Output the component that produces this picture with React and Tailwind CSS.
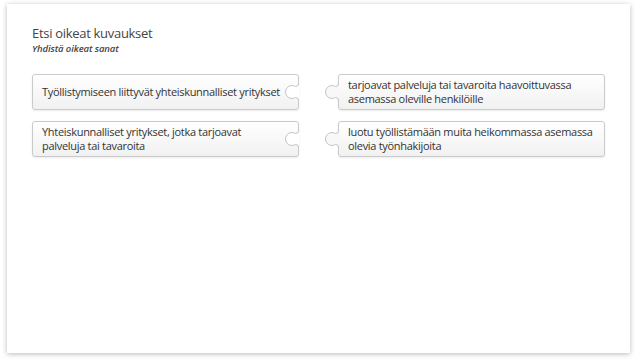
const left = [
  "Työllistymiseen liittyvät yhteiskunnalliset yritykset",
  "Yhteiskunnalliset yritykset, jotka tarjoavat palveluja tai tavaroita",
];

const right = [
  "tarjoavat palveluja tai tavaroita haavoittuvassa asemassa oleville henkilöille",
  "luotu työllistämään muita heikommassa asemassa olevia työnhakijoita",
];

const piece =
  "relative flex items-center rounded-[3px] border border-[#cacaca] bg-gradient-to-b from-white to-[#f1f1f1] shadow-[0_1px_2px_rgba(0,0,0,0.08)] text-[11px] leading-[14px] tracking-[-0.3px] text-[#333]";

const shape = "M15.5 4 Q15.5 6.5 12.5 6.5 A6.5 6.5 0 1 0 12.5 17.5 Q15.5 17.5 15.5 20";

// curved socket cut into the right edge of a left piece
function Socket() {
  return (
    <svg width="16" height="24" viewBox="0 0 16 24" className="absolute right-[-1px] top-1/2 -translate-y-1/2">
      <rect x="14.5" y="5" width="2" height="14" fill="#fff" />
      <path d={shape} fill="#fff" stroke="#c4c4c4" />
    </svg>
  );
}

// knob sticking out of the left edge of a right piece
function Knob() {
  return (
    <svg width="16" height="24" viewBox="0 0 16 24" className="absolute left-[-16px] top-1/2 -translate-y-1/2">
      <rect x="14.5" y="5" width="2.5" height="14" fill="#f8f8f8" />
      <path d={shape} fill="#f8f8f8" stroke="#c4c4c4" />
    </svg>
  );
}

export default function App() {
  return (
    <div className="h-[364px] w-[636px] bg-white pt-[4px] pl-[7px] font-['Open_Sans',sans-serif]">
      <div className="h-[349px] w-[623px] bg-white px-[25px] pt-[21px] shadow-[0_1px_5px_rgba(0,0,0,0.28)]">
        <h1 className="text-[13px] leading-[17px] tracking-[-0.3px] text-[#444]">Etsi oikeat kuvaukset</h1>
        <p className="text-[9.5px] leading-[13px] font-semibold italic tracking-[-0.1px] text-[#444]">Yhdistä oikeat sanat</p>

        <div className="mt-[19px] grid grid-cols-2 gap-x-[39px] gap-y-[11px]">
          {left.map((t, i) => (
            <div key={i} className="contents">
              <div className={piece + " pl-[9px] pr-[14px] py-[3px]"}>
                <span>{t}</span>
                <Socket />
              </div>
              <div className={piece + " pl-[9px] pr-[8px] py-[3px]"}>
                <span>{right[i]}</span>
                <Knob />
              </div>
            </div>
          ))}
        </div>
      </div>
    </div>
  );
}
